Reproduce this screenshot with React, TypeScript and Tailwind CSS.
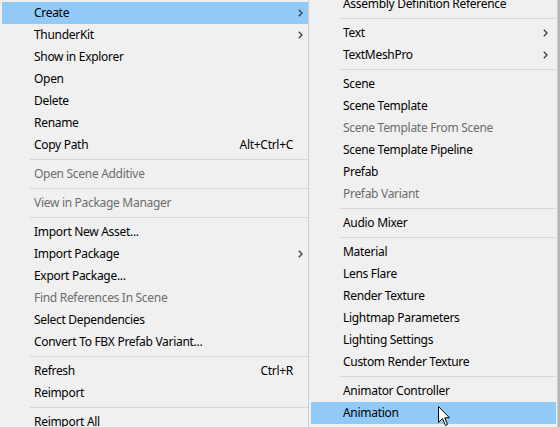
import React from "react";

type Entry =
  | { sep: true }
  | { label: string; shortcut?: string; sub?: boolean; disabled?: boolean; hot?: boolean };

const left: Entry[] = [
  { label: "Create", sub: true, hot: true },
  { label: "ThunderKit", sub: true },
  { label: "Show in Explorer" },
  { label: "Open" },
  { label: "Delete" },
  { label: "Rename" },
  { label: "Copy Path", shortcut: "Alt+Ctrl+C" },
  { sep: true },
  { label: "Open Scene Additive", disabled: true },
  { sep: true },
  { label: "View in Package Manager", disabled: true },
  { sep: true },
  { label: "Import New Asset..." },
  { label: "Import Package", sub: true },
  { label: "Export Package..." },
  { label: "Find References In Scene", disabled: true },
  { label: "Select Dependencies" },
  { label: "Convert To FBX Prefab Variant..." },
  { sep: true },
  { label: "Refresh", shortcut: "Ctrl+R" },
  { label: "Reimport" },
  { sep: true },
  { label: "Reimport All" },
];

const right: Entry[] = [
  { label: "Assembly Definition Reference" },
  { sep: true },
  { label: "Text", sub: true },
  { label: "TextMeshPro", sub: true },
  { sep: true },
  { label: "Scene" },
  { label: "Scene Template" },
  { label: "Scene Template From Scene", disabled: true },
  { label: "Scene Template Pipeline" },
  { label: "Prefab" },
  { label: "Prefab Variant", disabled: true },
  { sep: true },
  { label: "Audio Mixer" },
  { sep: true },
  { label: "Material" },
  { label: "Lens Flare" },
  { label: "Render Texture" },
  { label: "Lightmap Parameters" },
  { label: "Lighting Settings" },
  { label: "Custom Render Texture" },
  { sep: true },
  { label: "Animator Controller" },
  { label: "Animation", hot: true },
  { label: "Animator Override Controller" },
];

function Chevron() {
  return (
    <svg width="5" height="8" viewBox="0 0 5 8" className="block">
      <polyline points="0.8,0.8 4,4 0.8,7.2" fill="none" stroke="#3c3c3c" strokeWidth="1.3" />
    </svg>
  );
}

function Menu({ items, arrowCol }: { items: Entry[]; arrowCol: "left" | "right" }) {
  return (
    <div className="flex flex-col">
      {items.map((it, i) => {
        if ("sep" in it) {
          return (
            <div key={i} className="h-[7px] pl-[28px] pt-[3px]">
              <div className="h-px bg-[#d7d7d7]" />
            </div>
          );
        }
        return (
          <div
            key={i}
            className={`flex h-[22px] items-center pl-[32px] ${it.hot ? "bg-[#91c9f7]" : ""} ${
              it.disabled ? "text-[#6d6d6d]" : "text-black"
            }`}
          >
            <span className="flex-1 whitespace-nowrap">{it.label}</span>
            {it.shortcut && <span className="mr-[5px] whitespace-nowrap">{it.shortcut}</span>}
            <span className={`flex items-center ${arrowCol === "left" ? "w-[10px]" : "w-[13px]"}`}>
              {it.sub && <Chevron />}
            </span>
          </div>
        );
      })}
    </div>
  );
}

export default function App() {
  return (
    <div
      className="relative flex h-[427px] w-[560px] items-start overflow-hidden bg-[#f0f0f0] text-[12px] leading-[22px] tracking-[-0.3px]"
      style={{ fontFamily: '"Segoe UI", "Noto Sans", "Open Sans", sans-serif' }}
    >
      <div className="w-[308px] shrink-0 pl-[2px] pt-[2px]">
        <Menu items={left} arrowCol="left" />
      </div>
      <div className="mt-[-10px] w-[250px] shrink-0 border border-[#cccccc] bg-[#f0f0f0] py-[2px] pl-[2px] pr-[1px]">
        <Menu items={right} arrowCol="right" />
      </div>
      <div className="h-[427px] w-[2px] shrink-0 bg-[#b4b4b4]" />
      <svg
        className="absolute left-[438px] top-[406px]"
        width="13"
        height="21"
        viewBox="0 0 13 21"
      >
        <path
          d="M0.5 0.5 L0.5 16.5 L4.5 12.5 L7.5 19.5 L9.5 18.5 L6.8 11.8 L11.5 11.8 Z"
          fill="#ffffff"
          stroke="#000000"
          strokeWidth="1"
          strokeLinejoin="miter"
        />
      </svg>
    </div>
  );
}
